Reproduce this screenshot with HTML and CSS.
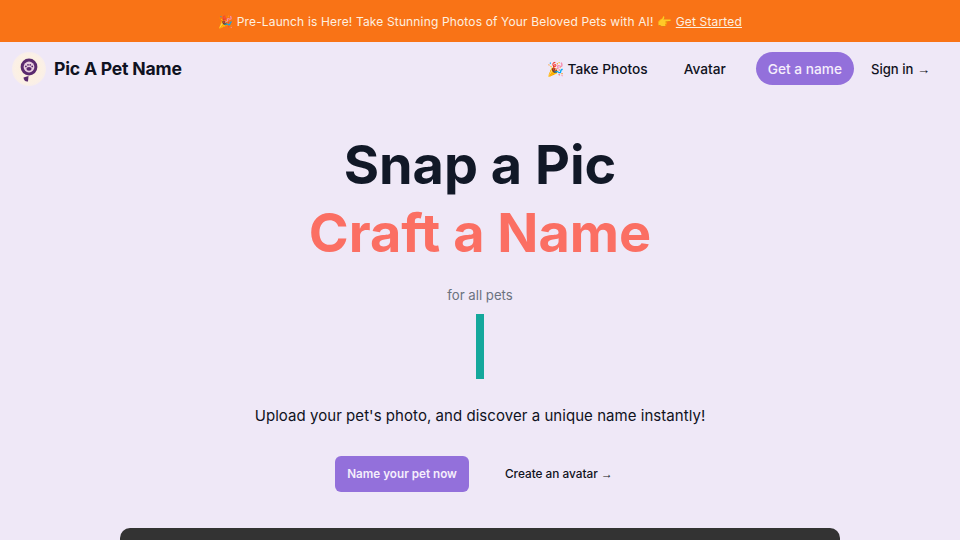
FILE: index.html
```html
<!DOCTYPE html>
<html lang="en">
<head>
<meta charset="utf-8">
<title>Pic A Pet Name</title>
<link rel="stylesheet" href="styles.css">
</head>
<body>
<div class="banner"><span>🎉 Pre-Launch is Here! Take Stunning Photos of Your Beloved Pets with AI! 👉 <a href="#" class="banner-link">Get Started</a></span></div>
<header class="nav">
  <a href="#" class="brand">
    <span class="logo">
      <svg viewBox="0 0 32 32" width="32" height="32" aria-hidden="true">
        <circle cx="16" cy="14" r="8.4" fill="#5a2a6e"/>
        <circle cx="16" cy="14" r="5.4" fill="#e9cfe0"/>
        <ellipse cx="16" cy="15.8" rx="2.6" ry="1.9" fill="#5a2a6e"/>
        <circle cx="12.9" cy="13.4" r="0.9" fill="#5a2a6e"/>
        <circle cx="15" cy="11.8" r="0.9" fill="#5a2a6e"/>
        <circle cx="17.2" cy="11.8" r="0.9" fill="#5a2a6e"/>
        <circle cx="19.2" cy="13.4" r="0.9" fill="#5a2a6e"/>
        <path d="M10.5 24.5 L15.5 23 L15 28.5 Q11 29 10.5 24.5Z" fill="#5a2a6e"/>
      </svg>
    </span>
    <span class="brand-name">Pic A Pet Name</span>
  </a>
  <nav class="links">
    <a href="#" class="link link-photos">🎉 Take Photos</a>
    <a href="#" class="link link-avatar">Avatar</a>
    <a href="#" class="pill">Get a name</a>
    <a href="#" class="link link-sign">Sign in <span class="arrow">→</span></a>
  </nav>
</header>
<main class="hero">
  <h1 class="title"><span class="line">Snap a Pic</span><span class="line accent">Craft a Name</span></h1>
  <p class="sub">for all pets</p>
  <div class="cursor"></div>
  <p class="lead">Upload your pet's photo, and discover a unique name instantly!</p>
  <div class="actions">
    <a href="#" class="cta">Name your pet now</a>
    <a href="#" class="ghost">Create an avatar <span class="arrow">→</span></a>
  </div>
  <div class="frame"></div>
</main>
</body>
</html>
```
FILE: styles.css
```css
* { box-sizing: border-box; }
html, body { margin: 0; height: 540px; overflow: hidden; }
body {
  background: #efe8f7;
  font-family: Inter, "Noto Sans", sans-serif;
  color: #111827;
}
a { text-decoration: none; color: inherit; }
.arrow { font-family: "Liberation Sans", sans-serif; }
.banner {
  height: 42px;
  background: #f97316;
  color: #fdf0e0;
  font-size: 12px;
  letter-spacing: 0.15px;
  display: flex;
  align-items: center;
  justify-content: center;
}
.banner-link { text-decoration: underline; }
.nav {
  height: 53px;
  display: flex;
  align-items: center;
  justify-content: space-between;
  padding: 0 30px 0 12px;
}
.brand { display: flex; align-items: center; gap: 8px; }
.logo {
  width: 34px;
  height: 34px;
  border-radius: 50%;
  background: radial-gradient(circle, #fdf1d8 0%, #fbf0e6 60%, #efe8f7 100%);
  display: flex;
  align-items: center;
  justify-content: center;
}
.brand-name { font-size: 17.6px; font-weight: 700; letter-spacing: -0.2px; color: #0f1221; }
.links { display: flex; align-items: center; font-size: 13.7px; font-weight: 500; color: #0f1221; }
.link-photos { margin-right: 36px; }
.link-avatar { margin-right: 30px; }
.link-sign { font-size: 13.1px; }
.pill {
  background: #9370db;
  color: #f5eefc;
  height: 33px;
  padding: 0 12px;
  border-radius: 17px;
  display: flex;
  align-items: center;
  margin-right: 17px;
}
.hero { display: flex; flex-direction: column; align-items: center; }
.title {
  margin: 36px 0 0;
  font-size: 54px;
  line-height: 68px;
  font-weight: 700;
  letter-spacing: 0;
  text-align: center;
  color: #111827;
}
.line { display: block; }
.accent { color: #fb6f63; }
.sub { margin: 19px 0 0; font-size: 13.2px; line-height: 18px; color: #6b7280; }
.cursor { width: 8px; height: 65px; margin-top: 10px; background: #14a89c; }
.lead { margin: 27px 0 0; font-size: 15px; line-height: 20px; letter-spacing: 0.05px; color: #0f1221; }
.actions { display: flex; align-items: center; margin-top: 30px; }
.cta {
  height: 36px;
  padding: 0 12px;
  background: #9370db;
  color: #f5eefc;
  border-radius: 6px;
  font-size: 11.7px;
  font-weight: 600;
  display: flex;
  align-items: center;
}
.ghost { margin: 0 12px 0 36px; font-size: 11.8px; font-weight: 500; color: #0f1221; }
.frame {
  width: 720px;
  height: 80px;
  margin-top: 36px;
  background: #333333;
  border-radius: 10px 10px 0 0;
}
```
